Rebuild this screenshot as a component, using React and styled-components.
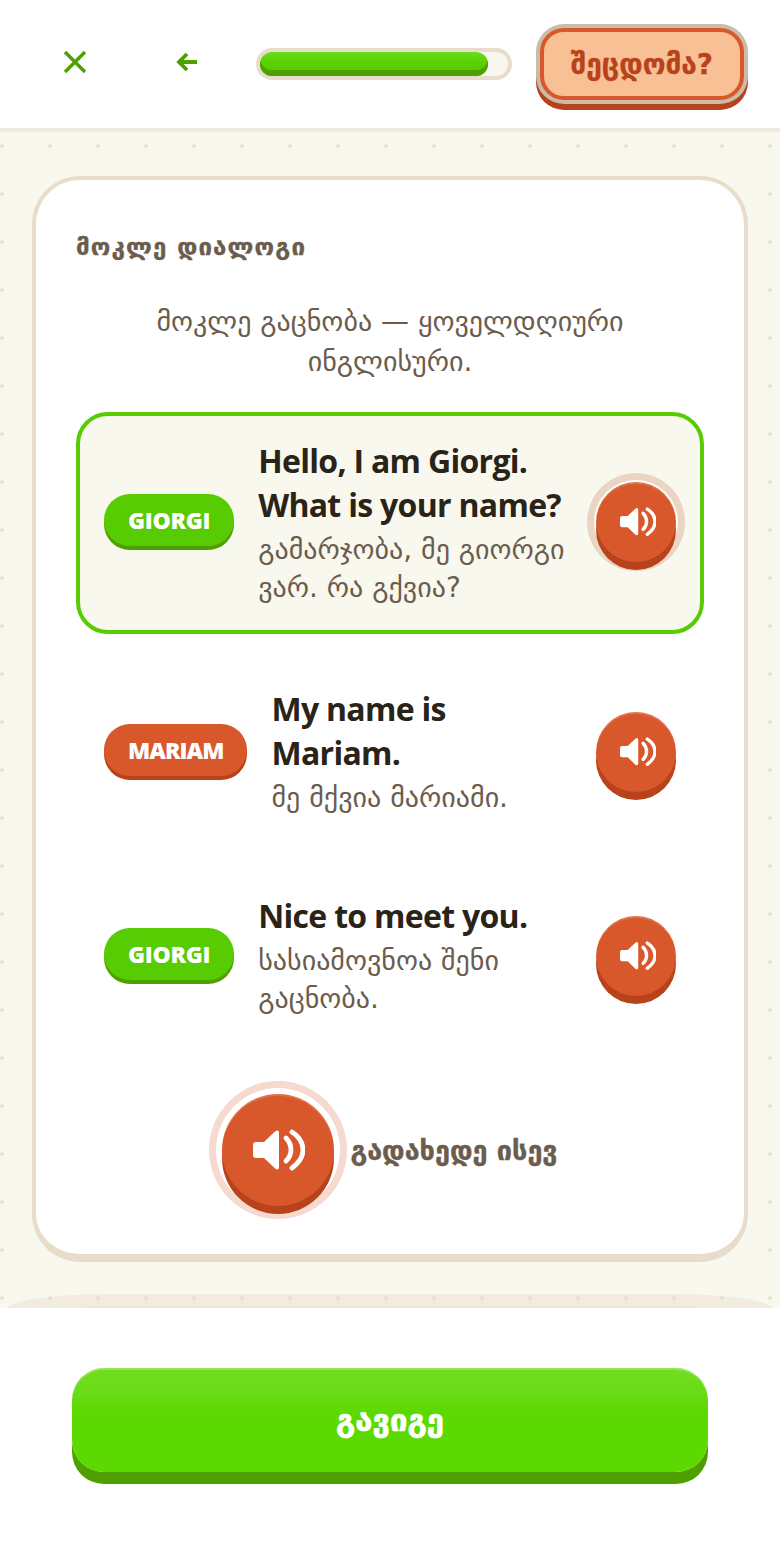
import React from "react";
import styled, { createGlobalStyle } from "styled-components";

const Global = createGlobalStyle`
  html, body { margin: 0; padding: 0; background: #fff; }
  * { box-sizing: border-box; }
  #root { width: 780px; height: 1560px; }
`;

const FONT = `"Open Sans", "DejaVu Sans", sans-serif`;
const GEO = `"DejaVu Sans", sans-serif`;

const Page = styled.div`
  width: 780px;
  height: 1560px;
  display: flex;
  flex-direction: column;
  font-family: ${FONT};
  overflow: hidden;
`;

const Header = styled.header`
  height: 132px;
  flex: none;
  display: flex;
  align-items: flex-start;
  padding: 28px 36px 0 32px;
  background: #fff;
  border-bottom: 4px solid #f1ebdf;
`;

const IconButton = styled.button`
  width: 86px;
  height: 68px;
  margin-right: 26px;
  padding: 0;
  border: 0;
  background: none;
  display: flex;
  align-items: center;
  justify-content: center;
  color: #4ea000;
`;

const Track = styled.div`
  width: 256px;
  height: 32px;
  margin-top: 20px;
  margin-right: 28px;
  border: 4px solid #e8dcca;
  border-radius: 16px;
  background: #f8f7ed;
  flex: none;
`;

const Fill = styled.div`
  height: 24px;
  border-radius: 12px;
  background: linear-gradient(#6cdb1c 0, #5ad000 40%, #58cc02 100%);
  box-shadow: inset 0 -6px 0 #4ea000;
`;

const ReportButton = styled.button`
  width: 204px;
  height: 72px;
  flex: none;
  border: 4px solid #d9582b;
  border-radius: 24px;
  background: #f9c096;
  color: #b8421c;
  font: 700 28px ${GEO};
  -webkit-text-stroke: 0.3px #b8421c;
  padding: 0;
  box-shadow: 0 0 0 4px #c9bca8, 0 6px 0 4px #b8421c;
`;

const Main = styled.main`
  flex: 1;
  position: relative;
  padding: 44px 32px 0;
  background-color: #f9f8ee;
  background-image: radial-gradient(circle at 2px 2px, #e6e3d5 1.6px, transparent 2.1px);
  background-size: 48px 48px;
  background-position: 0 12px;
`;

const Card = styled.section`
  height: 1086px;
  padding: 40px 40px 0;
  background: #fff;
  border: 4px solid #e8dcca;
  border-bottom-width: 8px;
  border-radius: 48px;
  display: flex;
  flex-direction: column;
`;

const Eyebrow = styled.h2`
  margin: 11px 0 0;
  font: 700 24px/32px ${GEO};
  color: #6b5d4d;
  letter-spacing: 1.2px;
  -webkit-text-stroke: 0.4px #6b5d4d;
`;

const Intro = styled.p`
  margin: 39px 0 0;
  text-align: center;
  font: 400 28px/40px ${GEO};
  color: #6b5d4d;
`;

const Lines = styled.div`
  margin-top: 30px;
  display: flex;
  flex-direction: column;
  gap: 23px;
`;

const Line = styled.div`
  display: flex;
  align-items: center;
  gap: 24px;
  padding: 23px 24px;
  margin-bottom: ${(p) => (p.$active ? "3px" : "0")};
  border: 4px solid ${(p) => (p.$active ? "#58cc02" : "transparent")};
  border-radius: 32px;
  background: ${(p) => (p.$active ? "#f9f8ee" : "transparent")};
`;

const Pill = styled.span`
  flex: none;
  height: 52px;
  margin-bottom: ${(p) => (p.$active ? "6px" : "4px")};
  padding: 0 24px;
  display: flex;
  align-items: center;
  border-radius: 26px;
  color: #fff;
  font: 800 23px ${FONT};
  letter-spacing: ${(p) => (p.$tone === "orange" ? "-1px" : "-0.3px")};
  background: ${(p) => (p.$tone === "orange" ? "#d9582b" : "#58cc02")};
  box-shadow: 0 4px 0 ${(p) => (p.$tone === "orange" ? "#b8421c" : "#4ea000")};
`;

const LineText = styled.div`
  flex: 1;
  min-width: 0;
`;

const English = styled.div`
  font: 700 32px/44px ${FONT};
  color: #2a2318;
  letter-spacing: -0.7px;
`;

const Translation = styled.div`
  margin-top: 4px;
  font: 400 28px/38px ${GEO};
  color: #6b5d4d;
`;

const Sound = styled.button`
  flex: none;
  width: 80px;
  height: 80px;
  margin-bottom: ${(p) => (p.$playing ? "2px" : "0")};
  padding: 0 0 0 4px;
  border: 0;
  border-radius: 50%;
  background: #d9582b;
  display: flex;
  align-items: center;
  justify-content: center;
  box-shadow: inset 0 2px 0 rgba(255, 255, 255, 0.15), 0 8px 0 #b8421c
    ${(p) => (p.$playing ? ", 0 0 0 2px #fff, 0 0 0 9px #ead5c3" : "")};
`;

const Replay = styled.div`
  margin-top: 49px;
  display: flex;
  align-items: center;
  justify-content: center;
  gap: 16px;
`;

const BigSound = styled(Sound)`
  width: 112px;
  height: 112px;
  margin-bottom: 8px;
  padding: 0 0 0 2px;
  box-shadow: inset 0 2px 0 rgba(255, 255, 255, 0.15), 0 8px 0 #b8421c, 0 0 0 6px #fff, 0 0 0 13px #f6d9cf;
`;

const ReplayLabel = styled.span`
  font: 700 27px ${GEO};
  color: #6b5d4d;
  margin-bottom: 8px;
  -webkit-text-stroke: 0.4px #6b5d4d;
`;

const Footer = styled.footer`
  height: 252px;
  flex: none;
  position: relative;
  padding: 60px 72px 0;
  background: #fff;

  &::before {
    content: "";
    position: absolute;
    left: 8px;
    right: 8px;
    top: -14px;
    height: 14px;
    border-radius: 110px 110px 0 0 / 14px 14px 0 0;
    background: rgba(232, 220, 202, 0.42);
  }

  &::after {
    content: "";
    position: absolute;
    left: 84px;
    right: 84px;
    top: -2px;
    height: 2px;
    background: rgba(232, 220, 202, 0.3);
  }
`;

const Continue = styled.button`
  width: 100%;
  height: 104px;
  padding: 0;
  border: 0;
  border-radius: 32px;
  color: #fff;
  font: 700 31px ${GEO};
  -webkit-text-stroke: 0.7px #fff;
  background: linear-gradient(#6fde1f 0, #6adb18 24%, #5cd900 42%, #5cd900 100%);
  box-shadow: inset 0 2px 0 rgba(255, 255, 255, 0.25), 0 12px 0 #4ea000;
`;

const Close = () => (
  <svg width="24" height="24" viewBox="0 0 24 24" fill="none" stroke="currentColor" strokeWidth="3.4">
    <path d="M2 2 L22 22 M22 2 L2 22" />
  </svg>
);

const Back = () => (
  <svg width="22" height="20" viewBox="0 0 22 20" fill="none" stroke="currentColor" strokeWidth="3.8">
    <path d="M21 10 H3 M11 2 L3 10 L11 18" />
  </svg>
);

const Speaker = ({ scale = 1 }) => (
  <svg width={52 * scale} height={42 * scale} viewBox="0 0 52 42" fill="none">
    <path
      d="M3 13 H11 L22 2.5 Q26 0 26 4 V38 Q26 42 22 39.5 L11 29 H3 Q0 29 0 26 V16 Q0 13 3 13 Z"
      fill="#fff"
    />
    <path d="M33 9 Q38 14 38 21 Q38 27 33 32" stroke="#fff" strokeWidth="4.8" strokeLinecap="round" />
    <path d="M39 3 Q50 10 50 21 Q50 31 39 39" stroke="#fff" strokeWidth="4.8" strokeLinecap="round" />
  </svg>
);

const lines = [
  {
    who: "GIORGI",
    tone: "green",
    active: true,
    en: ["Hello, I am Giorgi.", "What is your name?"],
    ka: ["გამარჯობა, მე გიორგი", "ვარ. რა გქვია?"],
  },
  {
    who: "MARIAM",
    tone: "orange",
    en: ["My name is", "Mariam."],
    ka: ["მე მქვია მარიამი."],
  },
  {
    who: "GIORGI",
    tone: "green",
    en: ["Nice to meet you."],
    ka: ["სასიამოვნოა შენი", "გაცნობა."],
  },
];

const Broken = ({ parts }) =>
  parts.map((part, i) => (
    <React.Fragment key={part}>
      {i > 0 && <br />}
      {part}
    </React.Fragment>
  ));

export default function App() {
  return (
    <Page>
      <Global />
      <Header>
        <IconButton aria-label="close">
          <Close />
        </IconButton>
        <IconButton aria-label="back">
          <Back />
        </IconButton>
        <Track>
          <Fill style={{ width: `${(228 / 248) * 100}%` }} />
        </Track>
        <ReportButton>შეცდომა?</ReportButton>
      </Header>
      <Main>
        <Card>
          <Eyebrow>მოკლე დიალოგი</Eyebrow>
          <Intro>
            მოკლე გაცნობა — ყოველდღიური
            <br />
            ინგლისური.
          </Intro>
          <Lines>
            {lines.map((line) => (
              <Line key={line.en[0]} $active={line.active}>
                <Pill $tone={line.tone} $active={line.active}>
                  {line.who}
                </Pill>
                <LineText>
                  <English>
                    <Broken parts={line.en} />
                  </English>
                  <Translation>
                    <Broken parts={line.ka} />
                  </Translation>
                </LineText>
                <Sound $playing={line.active} aria-label="play">
                  <Speaker scale={0.7} />
                </Sound>
              </Line>
            ))}
          </Lines>
          <Replay>
            <BigSound aria-label="replay">
              <Speaker />
            </BigSound>
            <ReplayLabel>გადახედე ისევ</ReplayLabel>
          </Replay>
        </Card>
      </Main>
      <Footer>
        <Continue>გავიგე</Continue>
      </Footer>
    </Page>
  );
}
